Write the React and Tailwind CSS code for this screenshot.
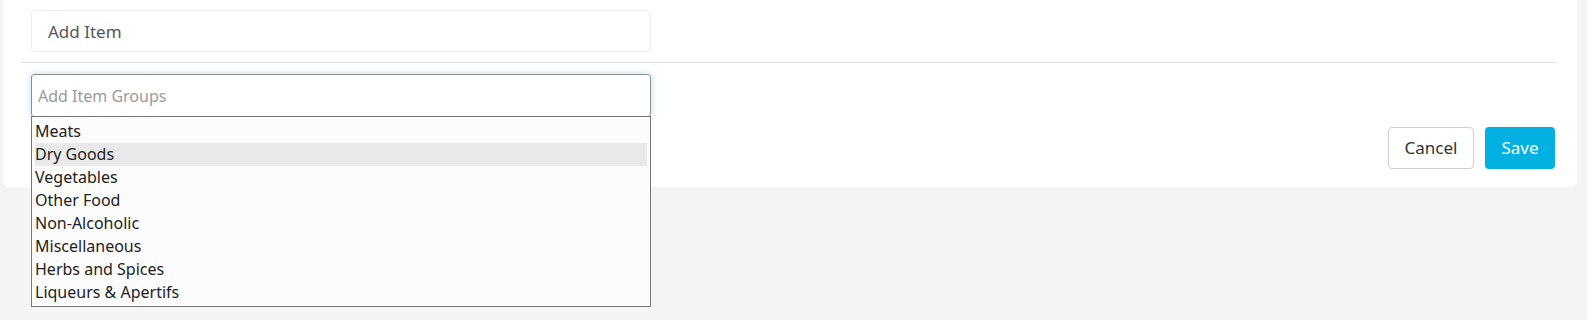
import React, { useState } from 'react';

const groups = [
  'Meats',
  'Dry Goods',
  'Vegetables',
  'Other Food',
  'Non-Alcoholic',
  'Miscellaneous',
  'Herbs and Spices',
  'Liqueurs & Apertifs',
];

export default function App() {
  const [active, setActive] = useState('Dry Goods');

  return (
    <div className="min-h-[320px] bg-[#f4f4f4] font-['Noto_Sans','Liberation_Sans',sans-serif]">
      <div className="ml-[3px] w-[1574px] h-[187px] bg-white rounded-b-[5px] pl-[18px] pr-[20px] pt-[10px]">
        <div className="pl-[10px]">
          <input
            type="text"
            defaultValue="Add Item"
            className="w-[620px] h-[42px] rounded-[4px] border border-[#ececec] px-[16px] text-[17px] text-[#555] outline-none"
          />
        </div>

        <div className="mt-[10px] h-px bg-[#dedede]" />

        <div className="relative pl-[10px] mt-[11px]">
          <input
            type="text"
            placeholder="Add Item Groups"
            className="w-[620px] h-[43px] rounded-[3px] border border-[#8f8f8f] px-[6px] text-[16px] text-[#555] placeholder:text-[#9a9a9a] outline-none shadow-[0_0_7px_rgba(102,175,233,0.45)]"
          />
          <ul className="absolute left-[10px] top-[42px] z-10 w-[620px] h-[191px] border border-[#767676] bg-[#fcfcfc] px-[3px] pt-[3px]">
            {groups.map(g => (
              <li
                key={g}
                onMouseEnter={() => setActive(g)}
                className={`h-[23px] leading-[23px] text-[16px] text-[#222] ${active === g ? 'bg-[#e9e9e9]' : ''}`}
              >
                {g}
              </li>
            ))}
          </ul>
        </div>

        <div className="flex justify-end gap-[11px] mr-[2px] mt-[10px]">
          <button className="w-[86px] h-[42px] rounded-[4px] border border-[#cfcfcf] bg-white text-[17px] text-[#333]">Cancel</button>
          <button className="w-[70px] h-[42px] rounded-[4px] bg-[#02b1e1] text-[17px] text-white">Save</button>
        </div>
      </div>
    </div>
  );
}
